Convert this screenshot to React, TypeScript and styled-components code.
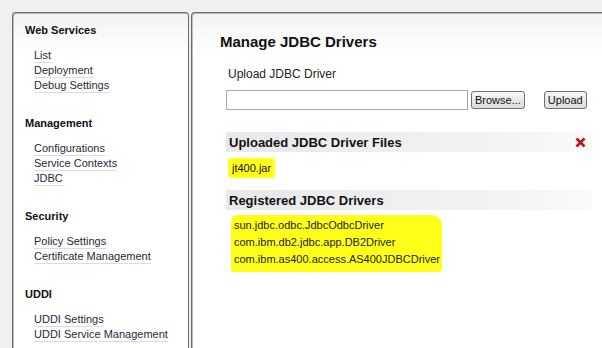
import styled, { createGlobalStyle } from "styled-components";

const GlobalStyle = createGlobalStyle`
  html, body {
    margin: 0;
    padding: 0;
    background: #f0f0f0;
    font-family: Arial, "Liberation Sans", sans-serif;
    color: #111;
  }
`;

const sections = [
  { title: "Web Services", links: ["List", "Deployment", "Debug Settings"] },
  { title: "Management", links: ["Configurations", "Service Contexts", "JDBC"] },
  { title: "Security", links: ["Policy Settings", "Certificate Management"] },
  { title: "UDDI", links: ["UDDI Settings", "UDDI Service Management"] },
];

const drivers = [
  "sun.jdbc.odbc.JdbcOdbcDriver",
  "com.ibm.db2.jdbc.app.DB2Driver",
  "com.ibm.as400.access.AS400JDBCDriver",
];

export default function App() {
  return (
    <>
      <GlobalStyle />
      <Page>
        <Sidebar>
          {sections.map((s) => (
            <Section key={s.title}>
              <SectionTitle>{s.title}</SectionTitle>
              <LinkList>
                {s.links.map((l) => (
                  <NavLink key={l}>{l}</NavLink>
                ))}
              </LinkList>
            </Section>
          ))}
        </Sidebar>
        <Main>
          <Heading>Manage JDBC Drivers</Heading>
          <Content>
            <Label>Upload JDBC Driver</Label>
            <UploadRow>
              <FileInput />
              <Button>Browse...</Button>
              <Button $gap={19}>Upload</Button>
            </UploadRow>
            <Bar>
              <BarTitle>Uploaded JDBC Driver Files</BarTitle>
              <svg width="11" height="11" viewBox="0 0 11 11">
                <path d="M1.5 1.5 L9.5 9.5 M9.5 1.5 L1.5 9.5" stroke="#c0141c" strokeWidth="2.6" />
              </svg>
            </Bar>
            <FileRow>
              <Marked>jt400.jar</Marked>
            </FileRow>
            <Bar>
              <BarTitle>Registered JDBC Drivers</BarTitle>
            </Bar>
            <DriverList>
              {drivers.map((d) => (
                <DriverItem key={d}>{d}</DriverItem>
              ))}
            </DriverList>
          </Content>
        </Main>
      </Page>
    </>
  );
}

const Page = styled.div`
  display: flex;
  align-items: stretch;
  height: 348px;
  padding: 12px 0 0 12px;
  box-sizing: border-box;
  gap: 2px;
  overflow: hidden;
`;

const Panel = styled.div`
  background: linear-gradient(#f2f2f2, #ffffff 40px);
  border: 1px solid #6a6a6a;
  border-bottom: none;
  box-shadow: inset 1px 1px 0 #bcbcbc;
  border-radius: 4px 4px 0 0;
  box-sizing: border-box;
`;

const Sidebar = styled(Panel)`
  width: 177px;
  flex-shrink: 0;
  padding: 10px 0 0 12px;
  display: flex;
  flex-direction: column;
  gap: 23px;
`;

const Section = styled.div`
  display: flex;
  flex-direction: column;
`;

const SectionTitle = styled.div`
  font-size: 11px;
  font-weight: bold;
  line-height: 14px;
  margin-bottom: 11px;
`;

const LinkList = styled.div`
  display: flex;
  flex-direction: column;
  padding-left: 9px;
`;

const NavLink = styled.span`
  align-self: flex-start;
  font-size: 11px;
  line-height: 14px;
  color: #1f2a3a;
  border-bottom: 1px solid #dcdcdc;
`;

const Main = styled(Panel)`
  flex: 1;
  border-right: none;
  border-radius: 4px 0 0 0;
  padding: 20px 10px 0 28px;
`;

const Heading = styled.div`
  font-size: 15px;
  font-weight: bold;
  line-height: 18px;
  margin-bottom: 15px;
`;

const Content = styled.div`
  padding-left: 6px;
`;

const Label = styled.div`
  font-size: 12px;
  line-height: 16px;
  color: #222;
  margin: 0 0 8px 2px;
`;

const UploadRow = styled.div`
  display: flex;
  align-items: center;
  margin-bottom: 22px;
`;

const FileInput = styled.div`
  width: 240px;
  height: 18px;
  border: 1px solid #a8a8a8;
  background: #fff;
`;

const Button = styled.div<{ $gap?: number }>`
  margin-left: ${(p) => p.$gap ?? 3}px;
  height: 16px;
  padding: 0 3px;
  border: 1px solid #707070;
  border-radius: 3px;
  background: linear-gradient(#f6f6f6, #dcdcdc);
  font-size: 11px;
  line-height: 16px;
  color: #111;
`;

const Bar = styled.div`
  width: 366px;
  height: 20px;
  display: flex;
  align-items: center;
  justify-content: space-between;
  padding: 0 6px 0 3px;
  box-sizing: border-box;
  background: linear-gradient(90deg, #e9e9e9, #f2f2f2 70%, #fafafa);
`;

const BarTitle = styled.span`
  font-size: 13px;
  font-weight: bold;
  color: #111;
`;

const FileRow = styled.div`
  padding: 6px 0 12px 2px;
`;

const Marked = styled.span`
  display: inline-block;
  background: #ffff1a;
  font-size: 11px;
  line-height: 20px;
  padding: 0 4px 0 4px;
  border-radius: 3px;
`;

const DriverList = styled.div`
  display: flex;
  flex-direction: column;
  align-items: flex-start;
  margin: 5px 0 0 5px;
  background: #ffff1a;
  width: 211px;
  border-radius: 6px 10px 4px 2px;
  padding: 2px 0 4px;
`;

const DriverItem = styled.span`
  font-size: 11px;
  line-height: 17px;
  padding-left: 3px;
  color: #222;
`;
